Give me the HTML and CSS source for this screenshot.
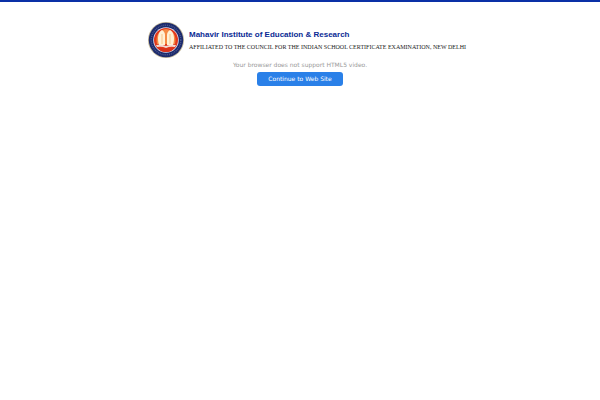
FILE: index.html
```
<!DOCTYPE html>
<html lang="en">
<head>
    <meta charset="UTF-8">
    <meta name="viewport" content="width=device-width, initial-scale=1.0">
    <title>Mahavir Institute of Education &amp; Research</title>
    <link rel="stylesheet" href="styles.css">
</head>
<body>
    <div class="container">
        <header class="brand">
            <svg class="logo" viewBox="0 0 36 36" aria-hidden="true">
                <circle cx="18" cy="18" r="18" fill="#c4b99c"/>
                <circle cx="18" cy="18" r="17.2" fill="#1c2a6c"/>
                <circle cx="18" cy="18" r="14.8" fill="none" stroke="#4c5890" stroke-width="1.4" stroke-dasharray="1 .9"/>
                <circle cx="18" cy="18" r="12.8" fill="#d9dcef"/>
                <circle cx="18" cy="18" r="12" fill="#e2391c"/>
                <path d="M9 22C7 14 11 8 18 7C25 8 29 14 27 22Z" fill="#f58a43"/>
                <path d="M11 23C9 16 10 10 14 8C16 9 17 11 17 13L17 23Z" fill="#fff1d4"/>
                <path d="M25 23C27 16 26 10 22 8C20 9 19 11 19 13L19 23Z" fill="#fff1d4"/>
                <path d="M14 12V22M22 12V22" stroke="#f5b06a" stroke-width=".7"/>
                <path d="M8 23Q13 22 18 24Q23 22 28 23L27 25Q22 24 18 26Q14 24 9 25Z" fill="#f3d9d2"/>
                <path d="M9 25Q18 28 27 25Q24 30 18 30Q12 30 9 25Z" fill="#d8321c"/>
            </svg>
            <div class="titles">
                <h1>Mahavir Institute of Education &amp; Research</h1>
                <p class="affiliation">AFFILIATED TO THE COUNCIL FOR THE INDIAN SCHOOL CERTIFICATE EXAMINATION, NEW DELHI</p>
            </div>
        </header>
        <p class="message">Your browser does not support HTML5 video.</p>
        <button type="button">Continue to Web Site</button>
    </div>
</body>
</html>
```

FILE: styles.css
```
body {
    margin: 0;
    border-top: 2px solid #0a30a6;
    background-color: #fff;
    font-family: "DejaVu Sans", sans-serif;
    font-size: 6px;
    text-align: center;
}
.container {
    padding: 20px 8px;
}
.brand {
    display: flex;
    align-items: center;
    gap: 5px;
    max-width: 304px;
    margin: auto;
    text-align: left;
}
.logo {
    width: 36px;
    height: 36px;
    flex-shrink: 0;
}
.titles {
    padding-top: 2px;
    white-space: nowrap;
}
h1 {
    margin: 0;
    color: #0a2a94;
    font-family: Impact, "Liberation Sans", sans-serif;
    font-size: 8px;
    line-height: 12px;
}
.affiliation {
    margin: 0;
    color: #222;
    font-family: "Liberation Serif", serif;
    font-size: 6px;
    line-height: 12px;
}
.message {
    margin: 2px 0;
    color: #999;
    line-height: 10px;
}
button {
    height: 14px;
    padding: 0 11px;
    border: none;
    border-radius: 3px;
    background-color: #2a80e8;
    color: white;
    font: inherit;
    line-height: 14px;
    cursor: pointer;
}
```
